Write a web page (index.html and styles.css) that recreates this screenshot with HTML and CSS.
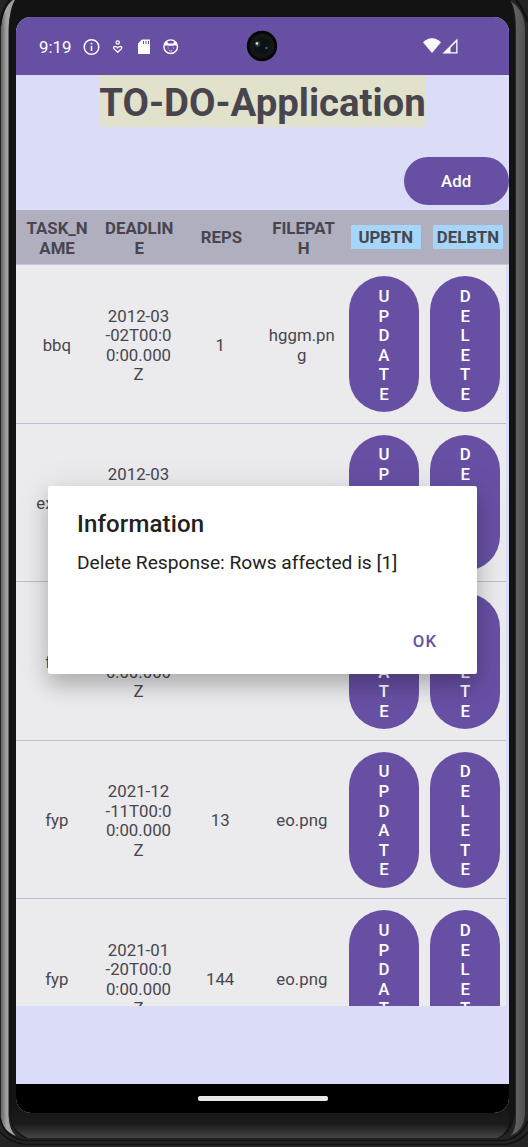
FILE: index.html
```html
<!DOCTYPE html>
<html lang="en">
<head>
<meta charset="utf-8">
<title>TO-DO-Application</title>
<link rel="stylesheet" href="styles.css">
</head>
<body>
<div class="phone">
  <svg class="bezel" width="528" height="1147" viewBox="0 0 528 1147" aria-hidden="true">
    <defs>
      <linearGradient id="left" x1="0" x2="1" y1="0" y2="0"><stop offset="0" stop-color="#666"/><stop offset=".3" stop-color="#a5a3a3"/><stop offset=".7" stop-color="#9b9999"/><stop offset="1" stop-color="#555"/></linearGradient>
      <linearGradient id="right" x1="0" x2="1" y1="0" y2="0"><stop offset="0" stop-color="#444"/><stop offset=".4" stop-color="#616161"/><stop offset="1" stop-color="#505050"/></linearGradient>
      <linearGradient id="chin" x1="0" x2="0" y1="0" y2="1"><stop offset="0" stop-color="#161616"/><stop offset=".55" stop-color="#1b1b1b"/><stop offset="1" stop-color="#454545"/></linearGradient>
    </defs>
    <rect width="528" height="1147" fill="#242424"/>
    <path d="M1 30Q2 8 13 0H20Q9 8 8.500 30V1115Q9 1130 16 1136Q2 1130 1 1118Z" fill="url(#left)"/>
    <path d="M509 0Q516 6 516 30V1118Q516 1130 510 1136Q525 1130 525 1112V28Q524 9 509 0Z" fill="url(#right)"/>
    <path d="M15 0H510Q515 9 515 32V1112Q514 1131 500 1138H25Q10 1131 9 1112V32Q9 9 15 0Z" fill="#131313"/>
    <path d="M16 1107H509Q513 1131 497 1138H28Q12 1131 10 1115Z" fill="url(#chin)"/>
    <path d="M0 1118Q4 1137 24 1140.500H504Q521 1138 528 1121M0 1132Q10 1143 26 1144.500H502Q518 1144 528 1132" fill="none" stroke="#101010" stroke-width="1.500"/>
    <path d="M0 26Q2 8 10 0M528 22Q523 8 516 0" fill="none" stroke="#101010" stroke-width="2"/>
  </svg>
  <main class="screen">
    <header class="status">
      <span class="clock">9:19</span>
      <svg class="tray" width="96" height="18" viewBox="0 0 96 18" fill="none" stroke="#fff" aria-hidden="true">
        <circle cx="8.500" cy="9" r="7.300" stroke-width="1.500"/>
        <path d="M8.500 8v5" stroke-width="1.500"/><circle cx="8.500" cy="5.700" r=".9" fill="#fff" stroke="none"/>
        <circle cx="34.700" cy="4.500" r="1.700" stroke-width="1.200"/>
        <path d="M34.700 14.300l-3.800-3.600q-1-2 1-2.400 1.700 0 2.800 1.600 1.100-1.600 2.800-1.600 2 .4 1 2.400z" stroke-width="1.300"/>
        <path d="M59 1.500h8v14.500H55V5.500z" fill="#fff" stroke="none"/>
        <path d="M60.500 3v3M63 3v3M65.500 3v3" stroke="#6750a4" stroke-width="1"/>
        <circle cx="87.700" cy="8.700" r="6.800" stroke-width="1.400"/>
        <path d="M81.500 5l.8-1.500 1.700.5 1.500 1.500h4.400l1.500-1.500 1.700-.5.800 1.500v3l-2-.8-1.500.6h-5.400l-1.500-.6-2 .8z" fill="#fff" stroke="none"/>
        <path d="M84.500 10h1.200M89.700 10h1.200M86.200 12.600q1.500.8 3 0" stroke-width=".8"/>
      </svg>
      <svg class="signal" width="35" height="16" viewBox="0 0 35 16" aria-hidden="true">
        <path d="M0 4.200Q9-3.500 18 4.200L9 15Z" fill="#fff"/>
        <path d="M34.500 .5V15.500H19.500Z" fill="#fff"/>
        <path d="M33.200 4V14.200H27.500V9.700Z" fill="#6750a4"/>
      </svg>
      <svg class="camera" width="32" height="32" viewBox="0 0 32 32" aria-hidden="true">
        <circle cx="16" cy="16" r="15.200" fill="#050505"/><circle cx="16" cy="16" r="12.500" fill="#141516"/><circle cx="16" cy="16" r="8" fill="#0e1114"/>
        <circle cx="11.500" cy="14" r="3" fill="#2c3735"/><circle cx="11" cy="13.500" r="1.300" fill="#dce9f5"/><circle cx="20.500" cy="18" r="1.200" fill="#37698b"/>
      </svg>
    </header>
    <h1 class="title"><span>TO-DO-Application</span></h1>
    <div class="toolbar"><button class="pill">Add</button></div>
    <div class="row head">
      <div>TASK_N<br>AME</div><div>DEADLIN<br>E</div><div>REPS</div><div>FILEPAT<br>H</div><div><span class="mark">UPBTN</span></div><div><span class="mark">DELBTN</span></div>
    </div>
    <section class="list">
      <div class="row item"><div>bbq</div><div>2012-03<br>-02T00:0<br>0:00.000<br>Z</div><div>1</div><div>hggm.pn<br>g</div><div><button class="tall">U<br>P<br>D<br>A<br>T<br>E</button></div><div><button class="tall">D<br>E<br>L<br>E<br>T<br>E</button></div></div>
      <div class="row item"><div>exam</div><div>2012-03<br>-02T00:0<br>0:00.000<br>Z</div><div>1</div><div>eo.png</div><div><button class="tall">U<br>P<br>D<br>A<br>T<br>E</button></div><div><button class="tall">D<br>E<br>L<br>E<br>T<br>E</button></div></div>
      <div class="row item"><div>fyp</div><div>2021-12<br>-11T00:0<br>0:00.000<br>Z</div><div>13</div><div>eo.png</div><div><button class="tall">U<br>P<br>D<br>A<br>T<br>E</button></div><div><button class="tall">D<br>E<br>L<br>E<br>T<br>E</button></div></div>
      <div class="row item"><div>fyp</div><div>2021-12<br>-11T00:0<br>0:00.000<br>Z</div><div>13</div><div>eo.png</div><div><button class="tall">U<br>P<br>D<br>A<br>T<br>E</button></div><div><button class="tall">D<br>E<br>L<br>E<br>T<br>E</button></div></div>
      <div class="row item"><div>fyp</div><div>2021-01<br>-20T00:0<br>0:00.000<br>Z</div><div>144</div><div>eo.png</div><div><button class="tall">U<br>P<br>D<br>A<br>T<br>E</button></div><div><button class="tall">D<br>E<br>L<br>E<br>T<br>E</button></div></div>
    </section>
    <footer class="nav"><span class="handle"></span></footer>
    <div class="dialog" role="dialog">
      <h2>Information</h2>
      <p>Delete Response: Rows affected is [1]</p>
      <button class="ok">OK</button>
    </div>
  </main>
</div>
</body>
</html>
```
FILE: styles.css
```css
* { box-sizing: border-box; }
body { margin: 0; font-family: Roboto, sans-serif; color: #49454f; }
button { font: inherit; border: 0; margin: 0; padding: 0; }
.phone { position: relative; width: 528px; height: 1147px; padding: 17px 19px 34px 16px; overflow: hidden; }
.bezel { position: absolute; inset: 0; }
.screen { position: relative; height: 1096px; display: flex; flex-direction: column; background: #dbdcf7; border-radius: 15px; overflow: hidden; }
.status { position: relative; flex: none; height: 58.4px; padding: 0 51px 0 23px; display: flex; align-items: center; background: #6750a4; color: #fff; }
.clock { width: 44px; font-size: 16.8px; line-height: 20px; padding-top: 1px; }
.tray { margin-top: 1px; }
.signal { margin-left: auto; }
.camera { position: absolute; left: 230px; top: 13px; }
.title { flex: none; margin: 0; height: 81.600px; display: flex; justify-content: center; align-items: flex-start; font-size: 38.400px; font-weight: 700; line-height: 51px; letter-spacing: -.03px; }
.title span { display: block; background: #e2e2cc; height: 51.400px; padding-top: 1.500px; }
.toolbar { flex: none; height: 53px; display: flex; justify-content: flex-end; }
.pill { width: 105.500px; height: 48px; border-radius: 24px; background: #6750a4; color: #fff; font-size: 16.800px; font-weight: 500; letter-spacing: .1px; }
.row { display: grid; grid-template-columns: repeat(6, minmax(0, 1fr)); align-items: center; text-align: center; font-size: 16.800px; line-height: 19.600px; }
.row > div { white-space: nowrap; display: grid; justify-content: center; }
.row.head > div:nth-child(-n+4) { padding-top: 3px; }
.row.head > div:nth-child(3) { padding-top: 2px; }
.row.item > div:nth-child(-n+4) { padding-top: 3.200px; }
.row.head { flex: none; height: 55.400px; background: #b0afc0; border-bottom: 1px solid #c8c7df; font-weight: 700; }
.mark { display: block; width: 70px; height: 24px; line-height: 24.500px; background: #a6d5fa; }
.list { flex: none; width: 490px; height: 740.600px; overflow: hidden; }
.row.item { height: 158.500px; background: #ebebed; border-bottom: 1.200px solid #bdbbd5; }
.row.item > div:nth-child(n+5) { padding: .5px 0 0 .8px; }
.row.item > div:nth-child(6) { padding-left: 0; }
.tall { width: 70px; height: 136px; padding-top: 2.800px; border-radius: 35px; background: #6750a4; color: #fff; font-weight: 500; line-height: 19.600px; }
.nav { margin-top: auto; height: 29px; background: #000; display: flex; align-items: center; justify-content: center; }
.handle { width: 130px; height: 5px; border-radius: 2px; background: #e8e8e8; }
.dialog { position: absolute; left: 32px; top: 469px; width: 429px; height: 188px; padding: 24px 29px 16px; display: flex; flex-direction: column; background: #fff; border-radius: 2px; box-shadow: 0 12px 20px rgba(0,0,0,.2), 0 4px 36px rgba(0,0,0,.1); color: #212121; }
.dialog h2 { margin: 0; font-size: 24px; font-weight: 500; line-height: 29px; letter-spacing: .14px; }
.dialog p { margin: 12px 0 0; font-size: 19.200px; line-height: 24px; }
.ok { margin: auto 10.500px 6px auto; background: none; color: #6750a4; font-size: 16.800px; font-weight: 500; letter-spacing: 1.300px; line-height: 22px; }
```
